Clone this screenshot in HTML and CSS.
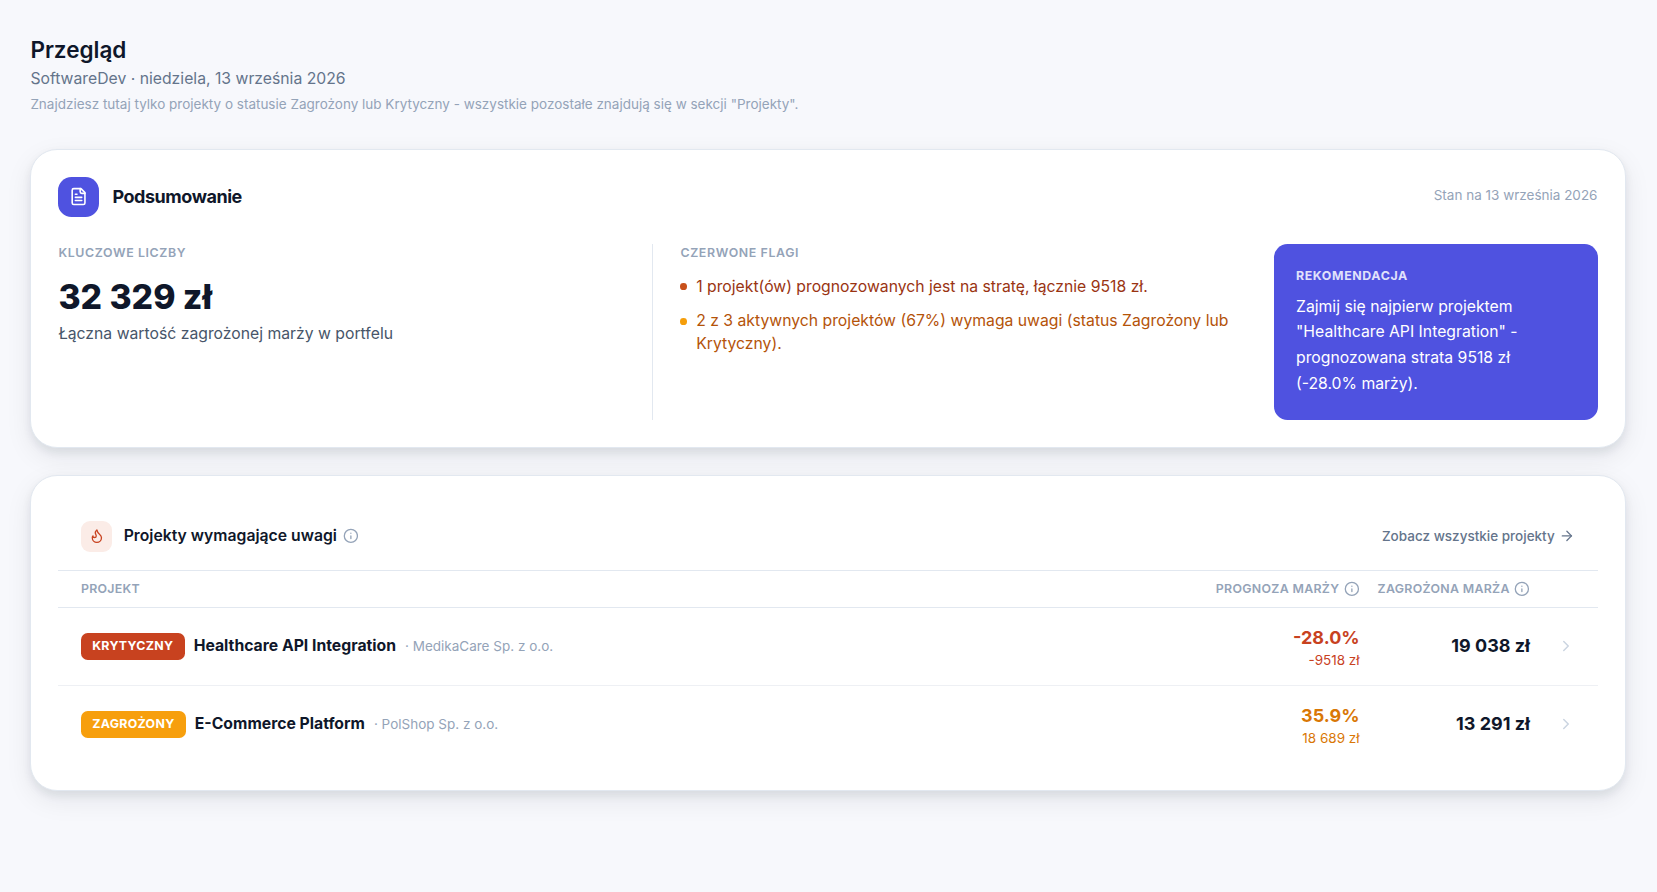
FILE: index.html
```html
<!DOCTYPE html>
<html lang="pl">
<head>
<meta charset="utf-8">
<meta name="viewport" content="width=device-width, initial-scale=1">
<title>Przegląd</title>
<link rel="stylesheet" href="styles.css">
</head>
<body>
<svg class="sprite" aria-hidden="true">
  <symbol id="info" viewBox="0 0 24 24"><circle cx="12" cy="12" r="10"/><path d="M12 16v-4"/><path d="M12 8h.01"/></symbol>
  <symbol id="chevron" viewBox="0 0 24 24"><path d="m9 18 6-6-6-6"/></symbol>
</svg>
<main class="page">
  <header class="page-header">
    <h1 class="page-title">Przegląd</h1>
    <p class="page-subtitle">SoftwareDev · niedziela, 13 września 2026</p>
    <p class="page-note">Znajdziesz tutaj tylko projekty o statusie Zagrożony lub Krytyczny - wszystkie pozostałe znajdują się w sekcji "Projekty".</p>
  </header>

  <section class="card">
    <div class="summary-head">
      <div class="summary-brand">
        <span class="summary-icon">
          <svg class="icon icon-file" viewBox="0 0 24 24" aria-hidden="true"><path d="M15 2H6a2 2 0 0 0-2 2v16a2 2 0 0 0 2 2h12a2 2 0 0 0 2-2V7Z"/><path d="M14 2v4a2 2 0 0 0 2 2h4"/><path d="M10 9H8"/><path d="M16 13H8"/><path d="M16 17H8"/></svg>
        </span>
        <h2 class="summary-title">Podsumowanie</h2>
      </div>
      <p class="summary-date">Stan na 13 września 2026</p>
    </div>
    <div class="summary-body">
      <div class="summary-columns">
        <div class="figures">
          <h3 class="label">Kluczowe liczby</h3>
          <p class="figure">32 329 zł</p>
          <p class="figure-note">Łączna wartość zagrożonej marży w portfelu</p>
        </div>
        <div class="flags">
          <h3 class="label">Czerwone flagi</h3>
          <ul class="flag-list">
            <li class="flag flag-critical">1 projekt(ów) prognozowanych jest na stratę, łącznie 9518 zł.</li>
            <li class="flag flag-warning">2 z 3 aktywnych projektów (67%) wymaga uwagi (status Zagrożony lub Krytyczny).</li>
          </ul>
        </div>
      </div>
      <aside class="advice">
        <h3 class="label label-light">Rekomendacja</h3>
        <p class="advice-text">Zajmij się najpierw projektem "Healthcare API Integration" - prognozowana strata 9518 zł (-28.0% marży).</p>
      </aside>
    </div>
  </section>

  <section class="card">
    <div class="projects-head">
      <div class="projects-brand">
        <span class="projects-icon">
          <svg class="icon" viewBox="0 0 24 24" aria-hidden="true"><path d="M8.5 14.5A2.5 2.5 0 0 0 11 12c0-1.38-.5-2-1-3-1.072-2.143-.224-4.054 2-6 .5 2.5 2 4.9 4 6.5 2 1.6 3 3.5 3 5.5a7 7 0 1 1-14 0c0-1.153.433-2.294 1-3a2.5 2.5 0 0 0 2.5 2.5z"/></svg>
        </span>
        <h2 class="projects-title">Projekty wymagające uwagi</h2>
        <button class="info-button" type="button" aria-label="Informacja o projektach"><svg class="icon"><use href="#info"/></svg></button>
      </div>
      <a class="all-link" href="#">Zobacz wszystkie projekty
        <svg class="icon" viewBox="0 0 24 24" aria-hidden="true"><path d="M5 12h14"/><path d="m12 5 7 7-7 7"/></svg>
      </a>
    </div>
    <table class="projects">
      <thead>
        <tr>
          <th class="col-name" scope="col">Projekt</th>
          <th class="col-number" scope="col"><span class="th-inner">Prognoza marży <button class="info-button" type="button" aria-label="Informacja o prognozie marży"><svg class="icon"><use href="#info"/></svg></button></span></th>
          <th class="col-number" scope="col"><span class="th-inner">Zagrożona marża <button class="info-button" type="button" aria-label="Informacja o zagrożonej marży"><svg class="icon"><use href="#info"/></svg></button></span></th>
          <td class="col-open"></td>
        </tr>
      </thead>
      <tbody>
        <tr>
          <td class="col-name"><div class="project"><span class="badge badge-critical">Krytyczny</span><span class="project-name">Healthcare API Integration</span><span class="client">· MedikaCare Sp. z o.o.</span></div></td>
          <td class="col-number margin critical"><div class="percent">-28.0%</div><div class="amount">-9518 zł</div></td>
          <td class="col-number risk">19 038 zł</td>
          <td class="col-open"><a class="open-link" href="#" aria-label="Otwórz Healthcare API Integration"><svg class="icon icon-chevron"><use href="#chevron"/></svg></a></td>
        </tr>
        <tr>
          <td class="col-name"><div class="project"><span class="badge badge-warning">Zagrożony</span><span class="project-name">E-Commerce Platform</span><span class="client">· PolShop Sp. z o.o.</span></div></td>
          <td class="col-number margin warning"><div class="percent">35.9%</div><div class="amount">18 689 zł</div></td>
          <td class="col-number risk">13 291 zł</td>
          <td class="col-open"><a class="open-link" href="#" aria-label="Otwórz E-Commerce Platform"><svg class="icon icon-chevron"><use href="#chevron"/></svg></a></td>
        </tr>
      </tbody>
    </table>
  </section>
</main>
</body>
</html>
```
FILE: styles.css
```css
* {
  box-sizing: border-box;
  margin: 0;
  padding: 0;
}

:root {
  zoom: 1.125;
}

body {
  background: #f7f8fc;
  color: #0f172a;
  font-family: Inter, "Noto Sans", sans-serif;
  font-size: 14px;
  line-height: 20px;
}

.sprite {
  display: none;
}

.icon {
  display: block;
  width: 14px;
  height: 14px;
  flex: none;
  fill: none;
  stroke: currentColor;
  stroke-width: 2;
  stroke-linecap: round;
  stroke-linejoin: round;
}

.page {
  display: flex;
  flex-direction: column;
  gap: 24px;
  padding: 32px 28px 32px 27px;
}

.page-header {
  padding-bottom: 5px;
}

.page-title {
  font-size: 20px;
  font-weight: 600;
  line-height: 25px;
}

.page-subtitle {
  margin-top: 3px;
  color: #64748b;
}

.page-note {
  margin-top: 3px;
  color: #94a3b8;
  font-size: 12px;
}

.card {
  padding: 24px;
  background: #fff;
  border: 1px solid #e2e8f0;
  border-radius: 24px;
  box-shadow: 0 8px 24px rgba(15, 23, 42, 0.08), 0 4px 8px rgba(15, 23, 42, 0.07);
}

.summary-head {
  display: flex;
  justify-content: space-between;
  margin-bottom: 24px;
}

.summary-brand {
  display: flex;
  align-items: center;
  gap: 12px;
}

.summary-icon {
  display: grid;
  place-items: center;
  width: 36px;
  height: 36px;
  border-radius: 12px;
  background: #4f52e0;
  color: #fff;
}

.icon-file {
  width: 17px;
  height: 17px;
}

.summary-title {
  font-size: 16px;
  font-weight: 700;
  letter-spacing: -0.025em;
}

.summary-date {
  padding-top: 8px;
  color: #94a3b8;
  font-size: 12px;
  line-height: 16px;
}

.summary-body {
  display: flex;
  gap: 24px;
}

.summary-columns {
  flex: 1;
  display: grid;
  grid-template-columns: 1fr 1fr;
}

.label {
  color: #94a3b8;
  font-size: 11px;
  font-weight: 600;
  letter-spacing: 0.05em;
  line-height: 16px;
  text-transform: uppercase;
}

.label-light {
  color: #e0e1fb;
  font-weight: 700;
}

.figure {
  margin-top: 12px;
  font-size: 30px;
  font-weight: 800;
  line-height: 38px;
}

.figure-note {
  margin-top: 4px;
  color: #475569;
}

.flags {
  padding-left: 24px;
  border-left: 1px solid #e2e8f0;
}

.flag-list {
  display: flex;
  flex-direction: column;
  gap: 11px;
  margin-top: 12px;
  list-style: none;
}

.flag {
  display: flex;
  gap: 8px;
}

.flag::before {
  content: "";
  flex: none;
  width: 6px;
  height: 6px;
  margin-top: 7px;
  border-radius: 50%;
}

.flag-critical {
  color: #9a3412;
}

.flag-critical::before {
  background: #c8501a;
}

.flag-warning {
  color: #b45309;
}

.flag-warning::before {
  background: #f59e0b;
}

.advice {
  width: 288px;
  padding: 20px;
  border-radius: 12px;
  background: #4f52e0;
  color: #fff;
}

.advice-text {
  margin-top: 8px;
  line-height: 23px;
}

.projects-head {
  display: flex;
  align-items: center;
  justify-content: space-between;
  padding: 16px 20px;
}

.projects-brand {
  display: flex;
  align-items: center;
}

.projects-icon {
  display: grid;
  place-items: center;
  width: 28px;
  height: 28px;
  margin-right: 10px;
  border-radius: 8px;
  background: #fbece7;
  color: #c8421f;
}

.projects-title {
  margin-right: 5px;
  font-size: 14px;
  font-weight: 600;
}

.info-button {
  border: 0;
  background: none;
  color: #94a3b8;
  cursor: pointer;
}

.all-link {
  display: flex;
  align-items: center;
  gap: 4px;
  color: #64748b;
  font-size: 12px;
  font-weight: 500;
  text-decoration: none;
}

.projects {
  width: 100%;
  border-collapse: collapse;
}

.projects thead tr {
  border-top: 1px solid #e2e8f0;
  border-bottom: 1px solid #e2e8f0;
}

.projects th {
  height: 33px;
  color: #94a3b8;
  font-size: 11px;
  font-weight: 600;
  letter-spacing: 0.025em;
  line-height: 16px;
  text-transform: uppercase;
  white-space: nowrap;
}

.projects tbody td {
  height: 69px;
}

.projects tbody tr + tr {
  border-top: 1px solid #eef0f4;
}

.col-name {
  width: 100%;
  padding-left: 20px;
  text-align: left;
}

.col-number {
  padding-left: 16px;
  text-align: right;
  white-space: nowrap;
}

.th-inner {
  display: flex;
  align-items: center;
  justify-content: flex-end;
  gap: 4px;
}

.col-open {
  padding: 0 20px 0 24px;
}

.project {
  display: flex;
  align-items: center;
  gap: 8px;
}

.badge {
  padding: 4px 10px;
  border-radius: 6px;
  color: #fff;
  font-size: 11px;
  font-weight: 700;
  letter-spacing: 0.025em;
  line-height: 16px;
  text-transform: uppercase;
}

.badge-critical {
  background: #c8421f;
}

.badge-warning {
  background: #f79f0d;
}

.project-name {
  font-weight: 700;
}

.client {
  color: #94a3b8;
  font-size: 12px;
}

.margin {
  padding-top: 4px;
}

.percent {
  font-size: 16px;
  font-weight: 700;
}

.amount {
  font-size: 12px;
  line-height: 18px;
}

.critical {
  color: #c8421f;
}

.warning {
  color: #d97706;
}

.risk {
  font-size: 16px;
  font-weight: 700;
}

.open-link {
  display: block;
  color: #cbd5e1;
}

.icon-chevron {
  width: 16px;
  height: 16px;
}
```
